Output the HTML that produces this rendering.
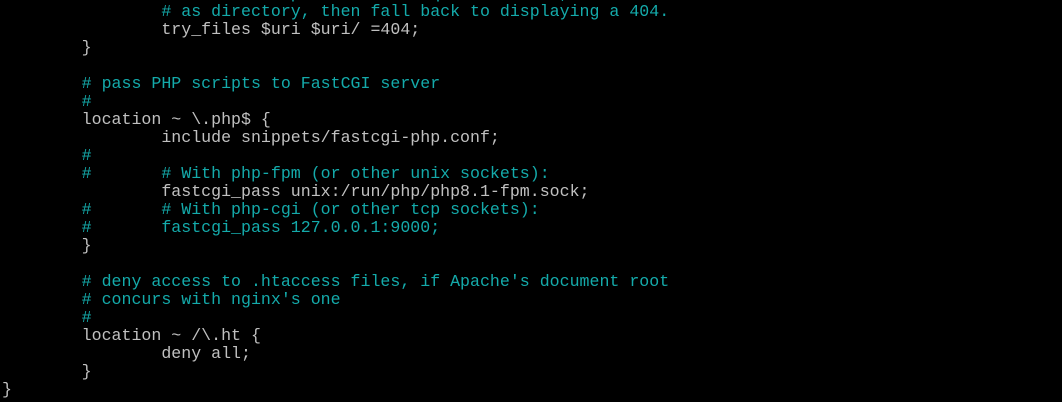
<!DOCTYPE html>
<html><head><style>
html,body{margin:0;padding:0;background:#000;width:1062px;height:402px;overflow:hidden}
pre{position:absolute;left:2px;top:-15px;margin:0;font-family:"Liberation Mono",monospace;font-size:16.6px;line-height:18px;color:#c0c0c0}
.c{color:#14aaaa}
</style></head><body>
<pre><span class="c">                # First attempt to serve request as file, then</span>
<span class="c">                # as directory, then fall back to displaying a 404.</span>
                try_files $uri $uri/ =404;
        }

<span class="c">        # pass PHP scripts to FastCGI server</span>
<span class="c">        #</span>
        location ~ \.php$ {
                include snippets/fastcgi-php.conf;
<span class="c">        #</span>
<span class="c">        #       # With php-fpm (or other unix sockets):</span>
                fastcgi_pass unix:/run/php/php8.1-fpm.sock;
<span class="c">        #       # With php-cgi (or other tcp sockets):</span>
<span class="c">        #       fastcgi_pass 127.0.0.1:9000;</span>
        }

<span class="c">        # deny access to .htaccess files, if Apache's document root</span>
<span class="c">        # concurs with nginx's one</span>
<span class="c">        #</span>
        location ~ /\.ht {
                deny all;
        }
}</pre>
</body></html>
